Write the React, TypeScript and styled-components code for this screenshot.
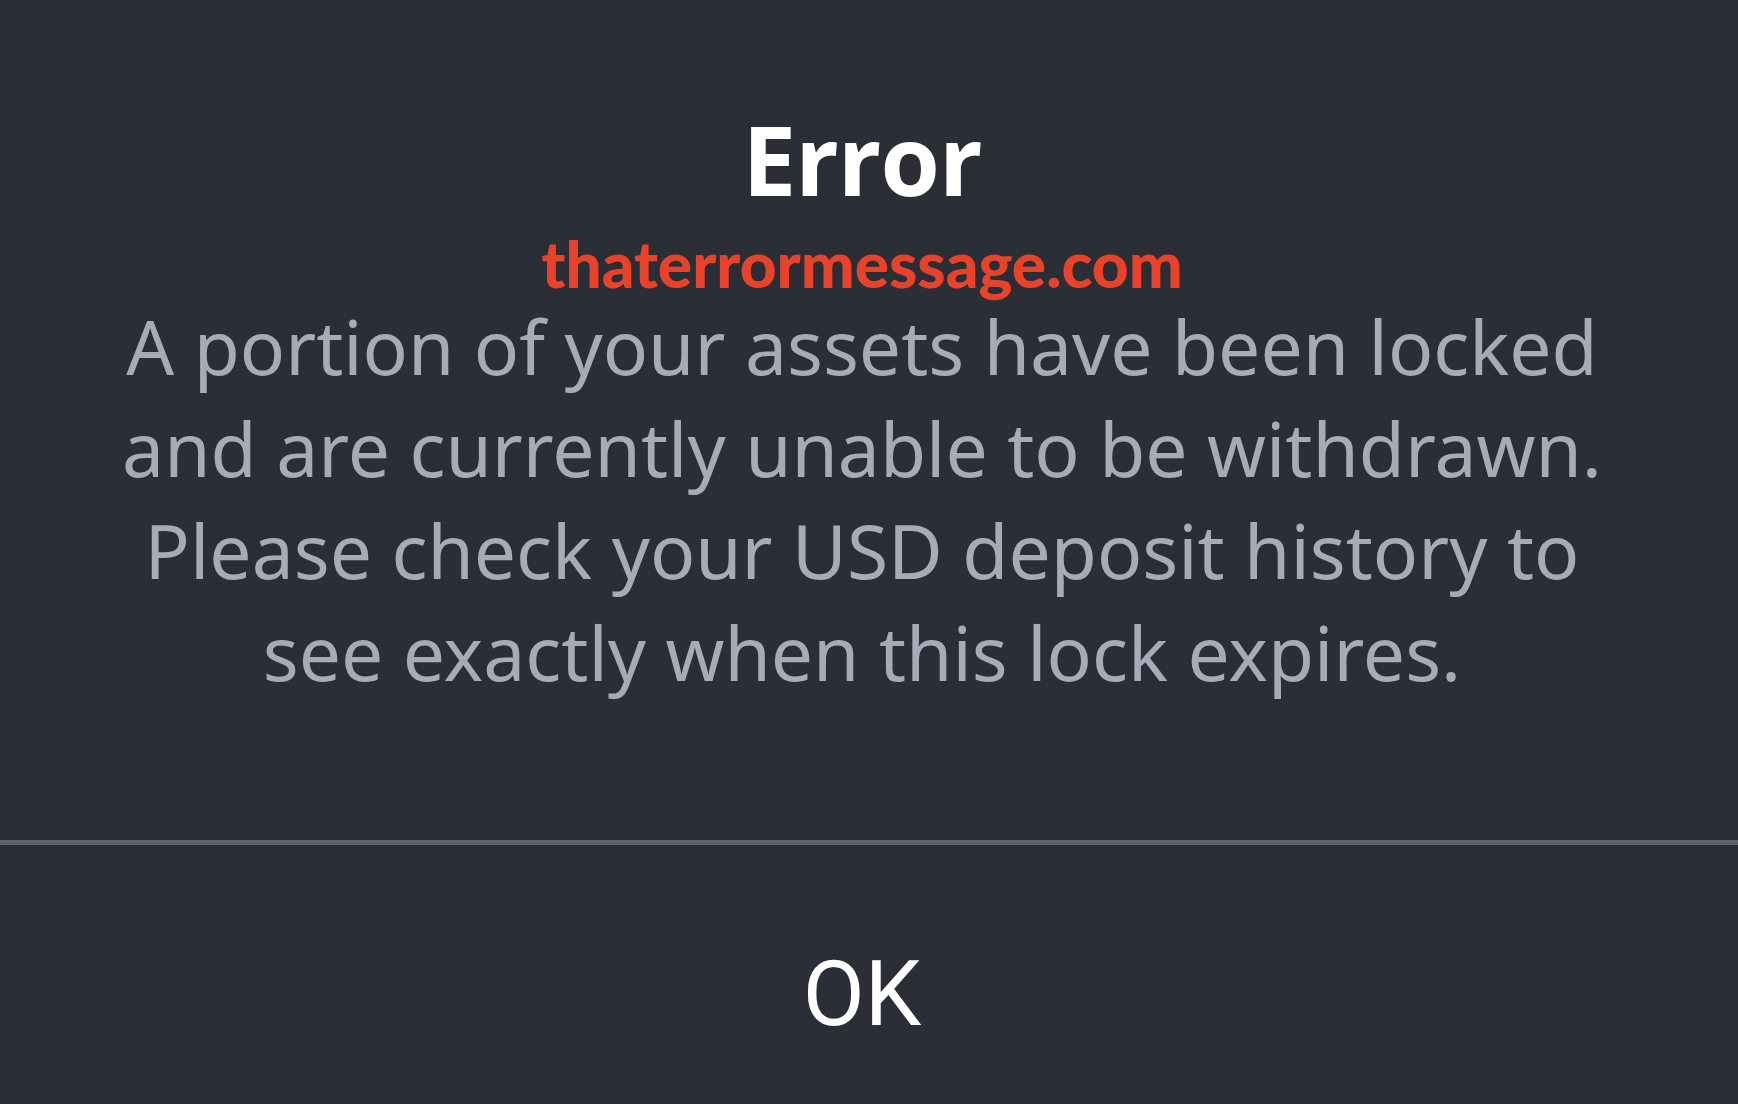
import styled, { createGlobalStyle } from "styled-components";

const GlobalStyle = createGlobalStyle`
  html, body {
    margin: 0;
    padding: 0;
    background: #2b2e37;
  }
`;

const Dialog = styled.div`
  width: 1738px;
  height: 1104px;
  background: #2b2e37;
  display: flex;
  flex-direction: column;
  overflow: hidden;
`;

const Body = styled.div`
  height: 840px;
  display: flex;
  flex-direction: column;
  align-items: center;
  padding: 104px 14px 0 0;
  box-sizing: border-box;
`;

const Title = styled.h1`
  margin: 0;
  font-family: "Open Sans", sans-serif;
  font-weight: 700;
  font-size: 96px;
  letter-spacing: -1px;
  line-height: 110px;
  color: #ffffff;
`;

const Watermark = styled.div`
  margin-top: 18px;
  font-family: Lato, sans-serif;
  font-weight: 900;
  font-size: 64px;
  line-height: 64px;
  color: #e8432a;
`;

const Message = styled.p`
  margin: -1px 0 0;
  font-family: "Noto Sans", sans-serif;
  font-size: 75px;
  line-height: 102px;
  color: #a8abb7;
  text-align: center;
`;

const Divider = styled.div`
  height: 5px;
  background: #5e6272;
`;

const Footer = styled.div`
  flex: 1;
  display: flex;
  align-items: center;
  justify-content: center;
  padding: 40px 14px 0 0;
`;

const OkButton = styled.button`
  background: none;
  border: none;
  padding: 0;
  font-family: Roboto, sans-serif;
  font-size: 90px;
  color: #ffffff;
  cursor: pointer;
`;

export default function App() {
  return (
    <>
      <GlobalStyle />
      <Dialog>
        <Body>
          <Title>Error</Title>
          <Watermark>thaterrormessage.com</Watermark>
          <Message>
            A portion of your assets have been locked
            <br />
            and are currently unable to be withdrawn.
            <br />
            Please check your USD deposit history to
            <br />
            see exactly when this lock expires.
          </Message>
        </Body>
        <Divider />
        <Footer>
          <OkButton>OK</OkButton>
        </Footer>
      </Dialog>
    </>
  );
}
